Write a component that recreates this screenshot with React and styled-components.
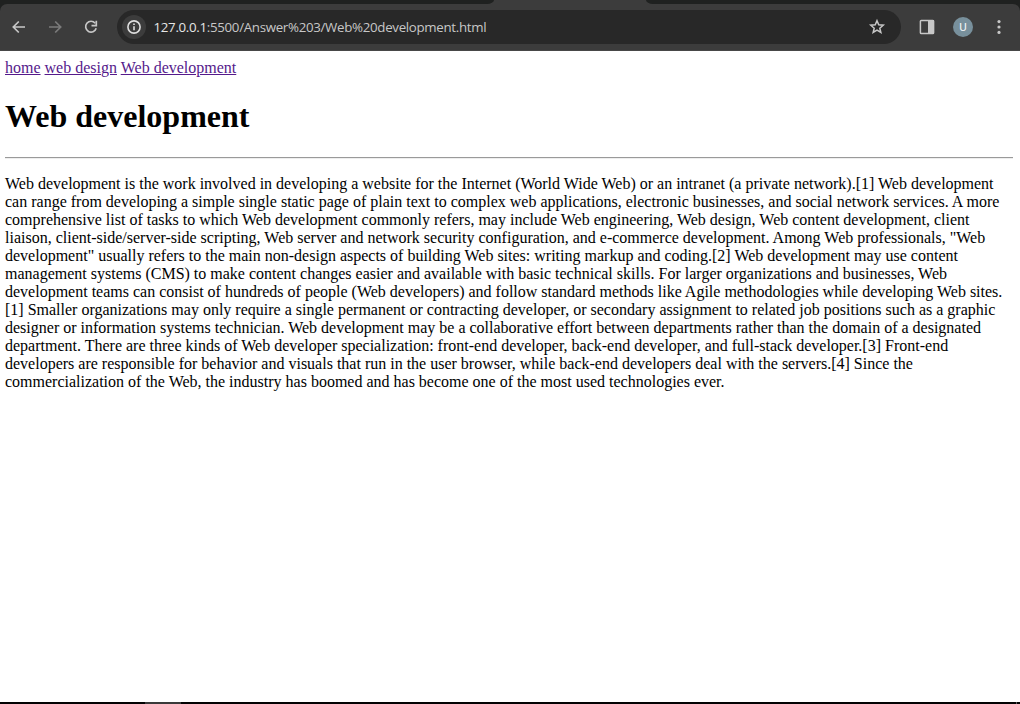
import React from "react";
import styled, { createGlobalStyle } from "styled-components";

const GlobalStyle = createGlobalStyle`
  html, body { margin: 0; padding: 0; overflow: hidden; background: #fff; }
`;

const Window = styled.div`
  display: flex;
  flex-direction: column;
  width: 1020px;
  height: 704px;
  overflow: hidden;
  background: #fff;
`;

const TabStrip = styled.div`
  display: flex;
  height: 4px;
  background: #3c3c3c;
`;

const TabGap = styled.div`
  width: ${(p) => p.$width}px;
  background: #1f2120;
  border-radius: ${(p) => (p.$side === "left" ? "0 0 7px 0 / 0 0 4px 0" : "0 0 0 7px / 0 0 0 4px")};
`;

const ActiveTab = styled.div`
  flex: 1;
`;

const ToolbarBack = styled.div`
  background: #1f2120;
`;

const Toolbar = styled.div`
  display: flex;
  align-items: center;
  box-sizing: border-box;
  height: 47px;
  padding: 0 12px 0 10px;
  background: #3c3c3c;
  border-bottom: 1px solid #474747;
  border-radius: 7px 7px 0 0;
`;

const ToolButton = styled.button`
  display: flex;
  flex: none;
  align-items: center;
  justify-content: center;
  width: 18px;
  height: 18px;
  padding: 0;
  margin: 0 ${(p) => p.$gap}px 0 0;
  border: 0;
  background: transparent;
  color: ${(p) => (p.$dim ? "#7b7b7b" : "#c7c7c7")};
  svg { display: block; flex: none; }
`;

const AddressBar = styled.div`
  display: flex;
  flex: none;
  align-items: center;
  box-sizing: border-box;
  width: 784px;
  height: 34px;
  margin-right: 17px;
  padding: 0 15px 0 5px;
  border-radius: 17px;
  background: #282828;
`;

const SiteInfo = styled.div`
  display: flex;
  align-items: center;
  justify-content: center;
  width: 24px;
  height: 24px;
  border-radius: 50%;
  background: #3c3c3c;
  color: #dedede;
`;

const Url = styled.div`
  flex: 1;
  margin-left: 7.5px;
  font: 13.3px/20px "Open Sans", "Noto Sans", sans-serif;
  letter-spacing: ${(p) => p.$tracking}px;
  white-space: nowrap;
  color: #c7c7c7;
`;

const Host = styled.span`
  color: #e6e6e6;
`;

const Avatar = styled.div`
  flex: none;
  width: 20px;
  height: 20px;
  margin-right: 17px;
  border-radius: 50%;
  background: #78909c;
  color: #f4f6f7;
  font: 400 11.5px/21px Roboto, sans-serif;
  text-align: center;
`;

const Page = styled.main`
  flex: 1;
  padding: 8px 7px 0 5px;
  font: 16px/18px "Liberation Serif", "Times New Roman", serif;
  color: #000;
`;

const Nav = styled.nav`
  height: 18px;
  white-space: nowrap;
`;

const Link = styled.a`
  color: #551a8b;
  text-decoration: underline;
  text-decoration-thickness: 1px;
  text-underline-offset: 1px;
`;

const Title = styled.h1`
  margin: 21px 0 22px;
  font-size: 32px;
  line-height: 37px;
  font-weight: bold;
`;

const Rule = styled.hr`
  margin: 0;
  height: 1px;
  border: 0;
  border-top: 1px solid #9a9a9a;
  background: #eeeeee;
`;

const Article = styled.p`
  margin: 16px 0 0;
`;

const Line = styled.span`
  display: block;
  white-space: nowrap;
`;

const Taskbar = styled.div`
  display: flex;
  height: 2px;
  background: #030303;
`;

const TaskItem = styled.div`
  width: ${(p) => p.$width}px;
  margin-left: ${(p) => p.$offset}px;
  background: ${(p) => p.$color};
`;

const lines = [
  "Web development is the work involved in developing a website for the Internet (World Wide Web) or an intranet (a private network).[1] Web development",
  "can range from developing a simple single static page of plain text to complex web applications, electronic businesses, and social network services. A more",
  "comprehensive list of tasks to which Web development commonly refers, may include Web engineering, Web design, Web content development, client",
  "liaison, client-side/server-side scripting, Web server and network security configuration, and e-commerce development. Among Web professionals, \"Web",
  "development\" usually refers to the main non-design aspects of building Web sites: writing markup and coding.[2] Web development may use content",
  "management systems (CMS) to make content changes easier and available with basic technical skills. For larger organizations and businesses, Web",
  "development teams can consist of hundreds of people (Web developers) and follow standard methods like Agile methodologies while developing Web sites.",
  "[1] Smaller organizations may only require a single permanent or contracting developer, or secondary assignment to related job positions such as a graphic",
  "designer or information systems technician. Web development may be a collaborative effort between departments rather than the domain of a designated",
  "department. There are three kinds of Web developer specialization: front-end developer, back-end developer, and full-stack developer.[3] Front-end",
  "developers are responsible for behavior and visuals that run in the user browser, while back-end developers deal with the servers.[4] Since the",
  "commercialization of the Web, the industry has boomed and has become one of the most used technologies ever.",
];

const ArrowIcon = ({ flip }) => (
  <svg width="18" height="18" viewBox="0 0 18 18" fill="none" stroke="currentColor" strokeWidth="1.7">
    <path d={flip ? "M3 9H14.3M9.2 3.5L14.7 9L9.2 14.5" : "M15 9H3.7M8.8 3.5L3.3 9L8.8 14.5"} />
  </svg>
);

const ReloadIcon = () => (
  <svg width="18" height="18" viewBox="0 0 18 18" fill="none" stroke="currentColor" strokeWidth="1.7">
    <path d="M13.2 5.2A5.4 5.4 0 1 0 14.2 10.3" />
    <path d="M14.3 2.8V7.6H9.5" />
  </svg>
);

const InfoIcon = () => (
  <svg width="16" height="16" viewBox="0 0 16 16" fill="none" stroke="currentColor" strokeWidth="1.6">
    <circle cx="8" cy="8" r="6.1" />
    <path d="M8 7.2V11.3M8 4.6V6.1" />
  </svg>
);

const StarIcon = () => (
  <svg width="18" height="18" viewBox="0 0 18 18" fill="none" stroke="currentColor" strokeWidth="1.5">
    <path d="M9 2.7L10.75 6.85L15.2 7.2L11.8 10.15L12.85 14.5L9 12.2L5.15 14.5L6.2 10.15L2.8 7.2L7.25 6.85Z" />
  </svg>
);

const SidePanelIcon = () => (
  <svg width="18" height="18" viewBox="0 0 18 18">
    <rect x="2.4" y="2.4" width="13.2" height="13.2" rx="0.8" fill="none" stroke="currentColor" strokeWidth="1.5" />
    <rect x="10" y="2" width="6" height="14" fill="currentColor" />
  </svg>
);

const MenuIcon = () => (
  <svg width="18" height="18" viewBox="0 0 18 18" fill="currentColor">
    <circle cx="9" cy="3.6" r="1.6" />
    <circle cx="9" cy="9" r="1.6" />
    <circle cx="9" cy="14.4" r="1.6" />
  </svg>
);

export default function App() {
  return (
    <>
      <GlobalStyle />
      <Window>
        <TabStrip>
          <TabGap $width={494} $side="left" />
          <ActiveTab />
          <TabGap $width={374} $side="right" />
        </TabStrip>
        <ToolbarBack>
          <Toolbar>
            <ToolButton $gap={18}><ArrowIcon /></ToolButton>
            <ToolButton $gap={18} $dim><ArrowIcon flip /></ToolButton>
            <ToolButton $gap={17}><ReloadIcon /></ToolButton>
            <AddressBar>
              <SiteInfo><InfoIcon /></SiteInfo>
              <Url $tracking={-0.31}><Host>127.0.0.1</Host>:5500/Answer%203/Web%20development.html</Url>
              <ToolButton $gap={0}><StarIcon /></ToolButton>
            </AddressBar>
            <ToolButton $gap={17}><SidePanelIcon /></ToolButton>
            <Avatar>U</Avatar>
            <ToolButton $gap={0}><MenuIcon /></ToolButton>
          </Toolbar>
        </ToolbarBack>
        <Page>
          <Nav>
            <Link href="#home">home</Link> <Link href="#design">web design</Link>{" "}
            <Link href="#development">Web development</Link>
          </Nav>
          <Title>Web development</Title>
          <Rule />
          <Article>
            {lines.map((line) => (
              <Line key={line}>{line} </Line>
            ))}
          </Article>
        </Page>
        <Taskbar>
          <TaskItem $offset={145} $width={36} $color="#3a3a3a" />
          <TaskItem $offset={835} $width={1} $color="#5a5a5a" />
        </Taskbar>
      </Window>
    </>
  );
}
